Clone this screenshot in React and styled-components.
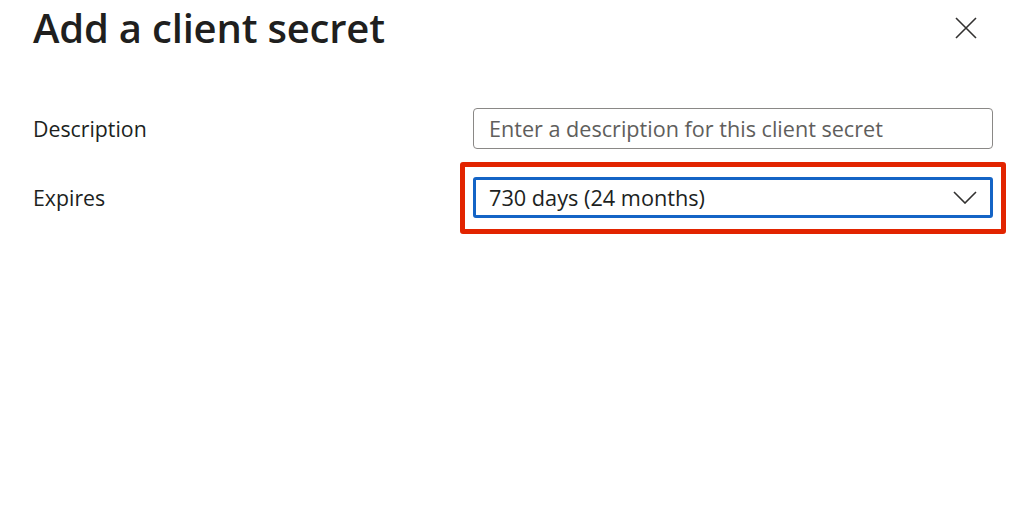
import React, { useState } from "react";
import styled, { createGlobalStyle } from "styled-components";

const GlobalStyle = createGlobalStyle`
  body {
    margin: 0;
    background: #ffffff;
    font-family: "Open Sans", "Noto Sans", sans-serif;
    color: #201f1e;
  }
`;

const Panel = styled.div`
  width: 1024px;
  height: 512px;
  box-sizing: border-box;
  padding: 0 31px 0 33px;
  background: #fff;
`;

const Header = styled.div`
  display: flex;
  justify-content: space-between;
  align-items: flex-start;
  height: 108px;
`;

const Title = styled.h1`
  margin: 0;
  padding-top: 4px;
  font-size: 40px;
  line-height: 48px;
  font-weight: 600;
  letter-spacing: -0.2px;
  color: #201f1e;
`;

const CloseButton = styled.button`
  margin: 16px 15px 0 0;
  padding: 0;
  width: 24px;
  height: 24px;
  border: none;
  background: none;
  display: flex;
  align-items: center;
  justify-content: center;
  cursor: pointer;
  color: #323130;
`;

const Form = styled.div`
  display: grid;
  grid-template-columns: 440px 520px;
  row-gap: 28px;
  align-items: center;
`;

const Label = styled.label`
  font-size: 21.3px;
  color: #201f1e;
`;

const TextInput = styled.input`
  box-sizing: border-box;
  width: 100%;
  height: 41px;
  border: 1px solid #8a8886;
  border-radius: 4px;
  padding: 0 15px;
  font-family: inherit;
  font-size: 21.6px;
  color: #201f1e;
  outline: none;

  &::placeholder {
    color: #605e5c;
  }
`;

const Highlight = styled.div`
  position: relative;

  &::after {
    content: "";
    position: absolute;
    inset: -15px -13px -16px -13px;
    border: 5px solid #e22400;
    border-radius: 3px;
    pointer-events: none;
  }
`;

const Select = styled.div`
  box-sizing: border-box;
  height: 41px;
  border: 3px solid #1464c6;
  border-radius: 3px;
  padding: 0 13px 0 13px;
  display: flex;
  align-items: center;
  justify-content: space-between;
  font-size: 21.7px;
  color: #201f1e;
  cursor: pointer;
`;

function CloseIcon() {
  return (
    <svg width="22" height="22" viewBox="0 0 22 22" fill="none">
      <path d="M1 1L21 21M21 1L1 21" stroke="#323130" strokeWidth="1.6" />
    </svg>
  );
}

function Chevron() {
  return (
    <svg width="24" height="13" viewBox="0 0 24 13" fill="none">
      <path d="M1 1L12 12L23 1" stroke="#323130" strokeWidth="1.6" />
    </svg>
  );
}

export default function App() {
  const [description, setDescription] = useState("");

  return (
    <Panel>
      <GlobalStyle />
      <Header>
        <Title>Add a client secret</Title>
        <CloseButton aria-label="Close">
          <CloseIcon />
        </CloseButton>
      </Header>
      <Form>
        <Label>Description</Label>
        <TextInput
          placeholder="Enter a description for this client secret"
          value={description}
          onChange={(e) => setDescription(e.target.value)}
        />
        <Label>Expires</Label>
        <Highlight>
          <Select>
            <span>730 days (24 months)</span>
            <Chevron />
          </Select>
        </Highlight>
      </Form>
    </Panel>
  );
}
